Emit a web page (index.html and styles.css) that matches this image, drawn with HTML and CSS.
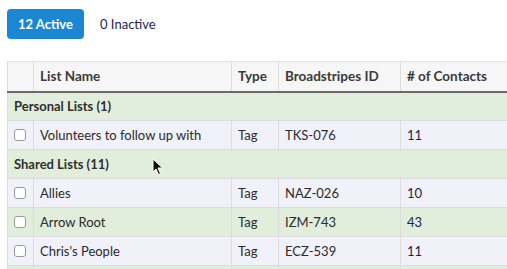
FILE: index.html
```html
<!DOCTYPE html>
<html lang="en">
<head>
  <meta charset="UTF-8" />
  <title>Lists</title>
  <link rel="stylesheet" href="styles.css">
</head>
<body>
  <div class="tabs">
    <button class="tab active">12 Active</button>
    <button class="tab">0 Inactive</button>
  </div>

  <div class="table-wrapper">
    <table>
      <thead>
        <tr>
          <th class="check-col"></th>
          <th class="name-col">List Name</th>
          <th class="type-col">Type</th>
          <th class="id-col">Broadstripes ID</th>
          <th class="count-col"># of Contacts</th>
        </tr>
      </thead>
      <tbody>
        <tr class="group"><td colspan="5">Personal Lists (1)</td></tr>
        <tr class="odd">
          <td><span class="box"></span></td>
          <td>Volunteers to follow up with</td><td>Tag</td><td>TKS-076</td><td class="num">11</td>
        </tr>
        <tr class="group"><td colspan="5">Shared Lists (11)</td></tr>
        <tr class="odd">
          <td><span class="box"></span></td>
          <td>Allies</td><td>Tag</td><td>NAZ-026</td><td class="num">10</td>
        </tr>
        <tr class="even">
          <td><span class="box"></span></td>
          <td>Arrow Root</td><td>Tag</td><td>IZM-743</td><td class="num">43</td>
        </tr>
        <tr class="odd">
          <td><span class="box"></span></td>
          <td>Chris's People</td><td>Tag</td><td>ECZ-539</td><td class="num">11</td>
        </tr>
        <tr class="even">
          <td></td><td></td><td></td><td></td><td></td>
        </tr>
      </tbody>
    </table>
  </div>

  <!-- mouse pointer from the capture -->
  <svg class="cursor" width="12" height="18" viewBox="0 0 12 18">
    <path d="M1 1 L1 14 L4 11 L6.5 16.5 L8.5 15.5 L6 10 L10.5 10 Z" fill="#111" stroke="#fff" stroke-width="1"/>
  </svg>
</body>
</html>
```

FILE: styles.css
```css
* { box-sizing: border-box; margin: 0; padding: 0; }
body {
  font-family: "Lato", "Open Sans", sans-serif;
  color: #2b2b2b;
  background: #fff;
  padding: 9px 0 0 7px;
  overflow: hidden;
  position: relative;
  height: 269px;
}
.tabs { display: flex; gap: 6px; align-items: center; margin-bottom: 22px; }
.tab {
  height: 30px;
  padding: 0 10px;
  border: none;
  border-radius: 4px;
  background: transparent;
  color: #1e1e5a;
  font-family: inherit;
  font-size: 13px;
  cursor: pointer;
}
.tab.active {
  background: #1a87d5;
  color: #fff;
  font-weight: 700;
  width: 77px;
  padding: 0;
}
.table-wrapper { width: 560px; }
table {
  border-collapse: collapse;
  table-layout: fixed;
  width: 100%;
  font-size: 13px;
}
th, td {
  height: 29px;
  padding: 0 6px;
  text-align: left;
  white-space: nowrap;
  border: 1px solid #dcdcdc;
}
th {
  height: 30px;
  background: #f6f6f6;
  font-weight: 700;
  font-size: 13.5px;
  color: #3a3a3a;
  border-bottom: 2px solid #6b6b6b;
  border-top-color: #e4e4e4;
}
.check-col { width: 26px; }
.name-col { width: 198px; }
.type-col { width: 47px; }
.id-col { width: 122px; }
.group td {
  background: #e0eedb;
  font-weight: 700;
  color: #2e2e2e;
}
.odd td { background: #f1f1fa; }
.even td { background: #e0eedb; }
.num { color: #1e1e50; }
.box {
  display: block;
  width: 12px;
  height: 12px;
  border: 1px solid #9a9a9a;
  border-radius: 3px;
  background: #fff;
}
.cursor {
  position: absolute;
  left: 152px;
  top: 158px;
}
```
